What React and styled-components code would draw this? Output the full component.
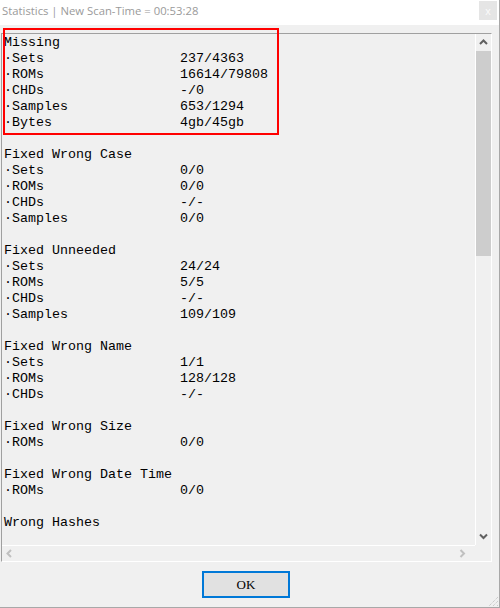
import React from "react";
import styled, { createGlobalStyle } from "styled-components";

const GlobalStyle = createGlobalStyle`
  html, body {
    margin: 0;
    padding: 0;
    background: #f0f0f0;
  }
`;

const Window = styled.div`
  position: relative;
  box-sizing: border-box;
  width: 500px;
  height: 608px;
  background: #f0f0f0;
  border-right: 1px solid #a8a8a8;
  border-bottom: 1px solid #a8a8a8;
  display: flex;
  flex-direction: column;
  overflow: hidden;
`;

const TitleBar = styled.div`
  height: 25px;
  flex: none;
  background: #fff;
  display: flex;
  align-items: center;
  justify-content: space-between;
  padding: 0 2px 0 2px;
`;

const Title = styled.span`
  font-family: "Open Sans", "Liberation Sans", sans-serif;
  font-size: 11.3px;
  color: #9a9a9a;
  margin-top: -4px;
`;

const CloseBtn = styled.div`
  width: 18px;
  height: 19px;
  margin-top: -4px;
  background: #e5e5e5;
  color: #fafafa;
  font-family: "Liberation Sans", sans-serif;
  font-size: 11px;
  display: flex;
  align-items: center;
  justify-content: center;
`;

const Panel = styled.div`
  box-sizing: border-box;
  margin: 8px 0 0 1px;
  width: 491px;
  height: 529px;
  flex: none;
  border-top: 1px solid #a0a0a0;
  border-left: 1px solid #a0a0a0;
  border-right: 1px solid #fff;
  border-bottom: 1px solid #fff;
  display: grid;
  grid-template-columns: 1fr 16px;
  grid-template-rows: 1fr 16px;
  overflow: hidden;
`;

const Content = styled.div`
  padding: 1px 0 0 2px;
  overflow: hidden;
  font-family: "Liberation Mono", "Courier New", monospace;
  font-size: 13.33px;
  line-height: 16px;
  color: #000;
  white-space: pre;
`;

const Line = styled.div`
  height: 16px;
`;

const Scroll = styled.div`
  box-sizing: border-box;
  border-left: 1px solid #fff;
  display: flex;
  flex-direction: column;
`;

const HScroll = styled.div`
  border-top: 1px solid #fff;
  display: flex;
  align-items: center;
  justify-content: space-between;
  padding: 0 9px 0 4px;
`;

const Corner = styled.div``;

const ArrowBox = styled.div`
  height: 17px;
  flex: none;
  display: flex;
  align-items: center;
  justify-content: center;
`;

const Thumb = styled.div`
  height: 205px;
  flex: none;
  background: #cdcdcd;
`;

const Track = styled.div`
  flex: 1;
`;

const Footer = styled.div`
  width: 492px;
  display: flex;
  justify-content: center;
  padding-top: 9px;
`;

const OkButton = styled.button`
  box-sizing: border-box;
  width: 88px;
  height: 27px;
  border: 2px solid #0078d7;
  background: #e1e1e1;
  font-family: "Liberation Serif", serif;
  font-size: 13px;
  color: #000;
  padding: 0;
`;

const Highlight = styled.div`
  position: absolute;
  left: 3px;
  top: 28px;
  width: 276px;
  height: 107px;
  box-sizing: border-box;
  border: 2px solid #ff0000;
  pointer-events: none;
`;

const Grip = styled.svg`
  position: absolute;
  right: 0;
  bottom: 0;
`;

const Chevron = ({ dir, color }) => {
  const paths = {
    up: "M1 5 L4.5 1.5 L8 5",
    down: "M1 1.5 L4.5 5 L8 1.5",
    left: "M5 1 L1.5 4.5 L5 8",
    right: "M1.5 1 L5 4.5 L1.5 8",
  };
  const horiz = dir === "left" || dir === "right";
  return (
    <svg width={horiz ? 7 : 9} height={horiz ? 9 : 7} viewBox={horiz ? "0 0 7 9" : "0 0 9 7"}>
      <path d={paths[dir]} fill="none" stroke={color} strokeWidth="2" />
    </svg>
  );
};

const groups = [
  ["Missing", [["Sets", "237/4363"], ["ROMs", "16614/79808"], ["CHDs", "-/0"], ["Samples", "653/1294"], ["Bytes", "4gb/45gb"]]],
  ["Fixed Wrong Case", [["Sets", "0/0"], ["ROMs", "0/0"], ["CHDs", "-/-"], ["Samples", "0/0"]]],
  ["Fixed Unneeded", [["Sets", "24/24"], ["ROMs", "5/5"], ["CHDs", "-/-"], ["Samples", "109/109"]]],
  ["Fixed Wrong Name", [["Sets", "1/1"], ["ROMs", "128/128"], ["CHDs", "-/-"]]],
  ["Fixed Wrong Size", [["ROMs", "0/0"]]],
  ["Fixed Wrong Date Time", [["ROMs", "0/0"]]],
  ["Wrong Hashes", []],
];

export default function App() {
  const lines = [];
  groups.forEach(([head, rows], i) => {
    if (i > 0) lines.push("");
    lines.push(head);
    rows.forEach(([k, v]) => lines.push(("\u00b7" + k).padEnd(22, " ") + v));
  });

  return (
    <>
      <GlobalStyle />
      <Window>
        <TitleBar>
          <Title>Statistics | New Scan-Time = 00:53:28</Title>
          <CloseBtn>x</CloseBtn>
        </TitleBar>
        <Panel>
          <Content>
            {lines.map((l, i) => (
              <Line key={i}>{l}</Line>
            ))}
          </Content>
          <Scroll>
            <ArrowBox>
              <Chevron dir="up" color="#606060" />
            </ArrowBox>
            <Thumb />
            <Track />
            <ArrowBox>
              <Chevron dir="down" color="#606060" />
            </ArrowBox>
          </Scroll>
          <HScroll>
            <Chevron dir="left" color="#c0c0c0" />
            <Chevron dir="right" color="#c0c0c0" />
          </HScroll>
          <Corner />
        </Panel>
        <Footer>
          <OkButton>OK</OkButton>
        </Footer>
        <Highlight />
        <Grip width="12" height="12" viewBox="0 0 12 12">
          <path d="M11 2 L2 11 M11 6 L6 11 M11 10 L10 11" stroke="#bcbcbc" strokeWidth="1" strokeDasharray="1 1" />
        </Grip>
      </Window>
    </>
  );
}
